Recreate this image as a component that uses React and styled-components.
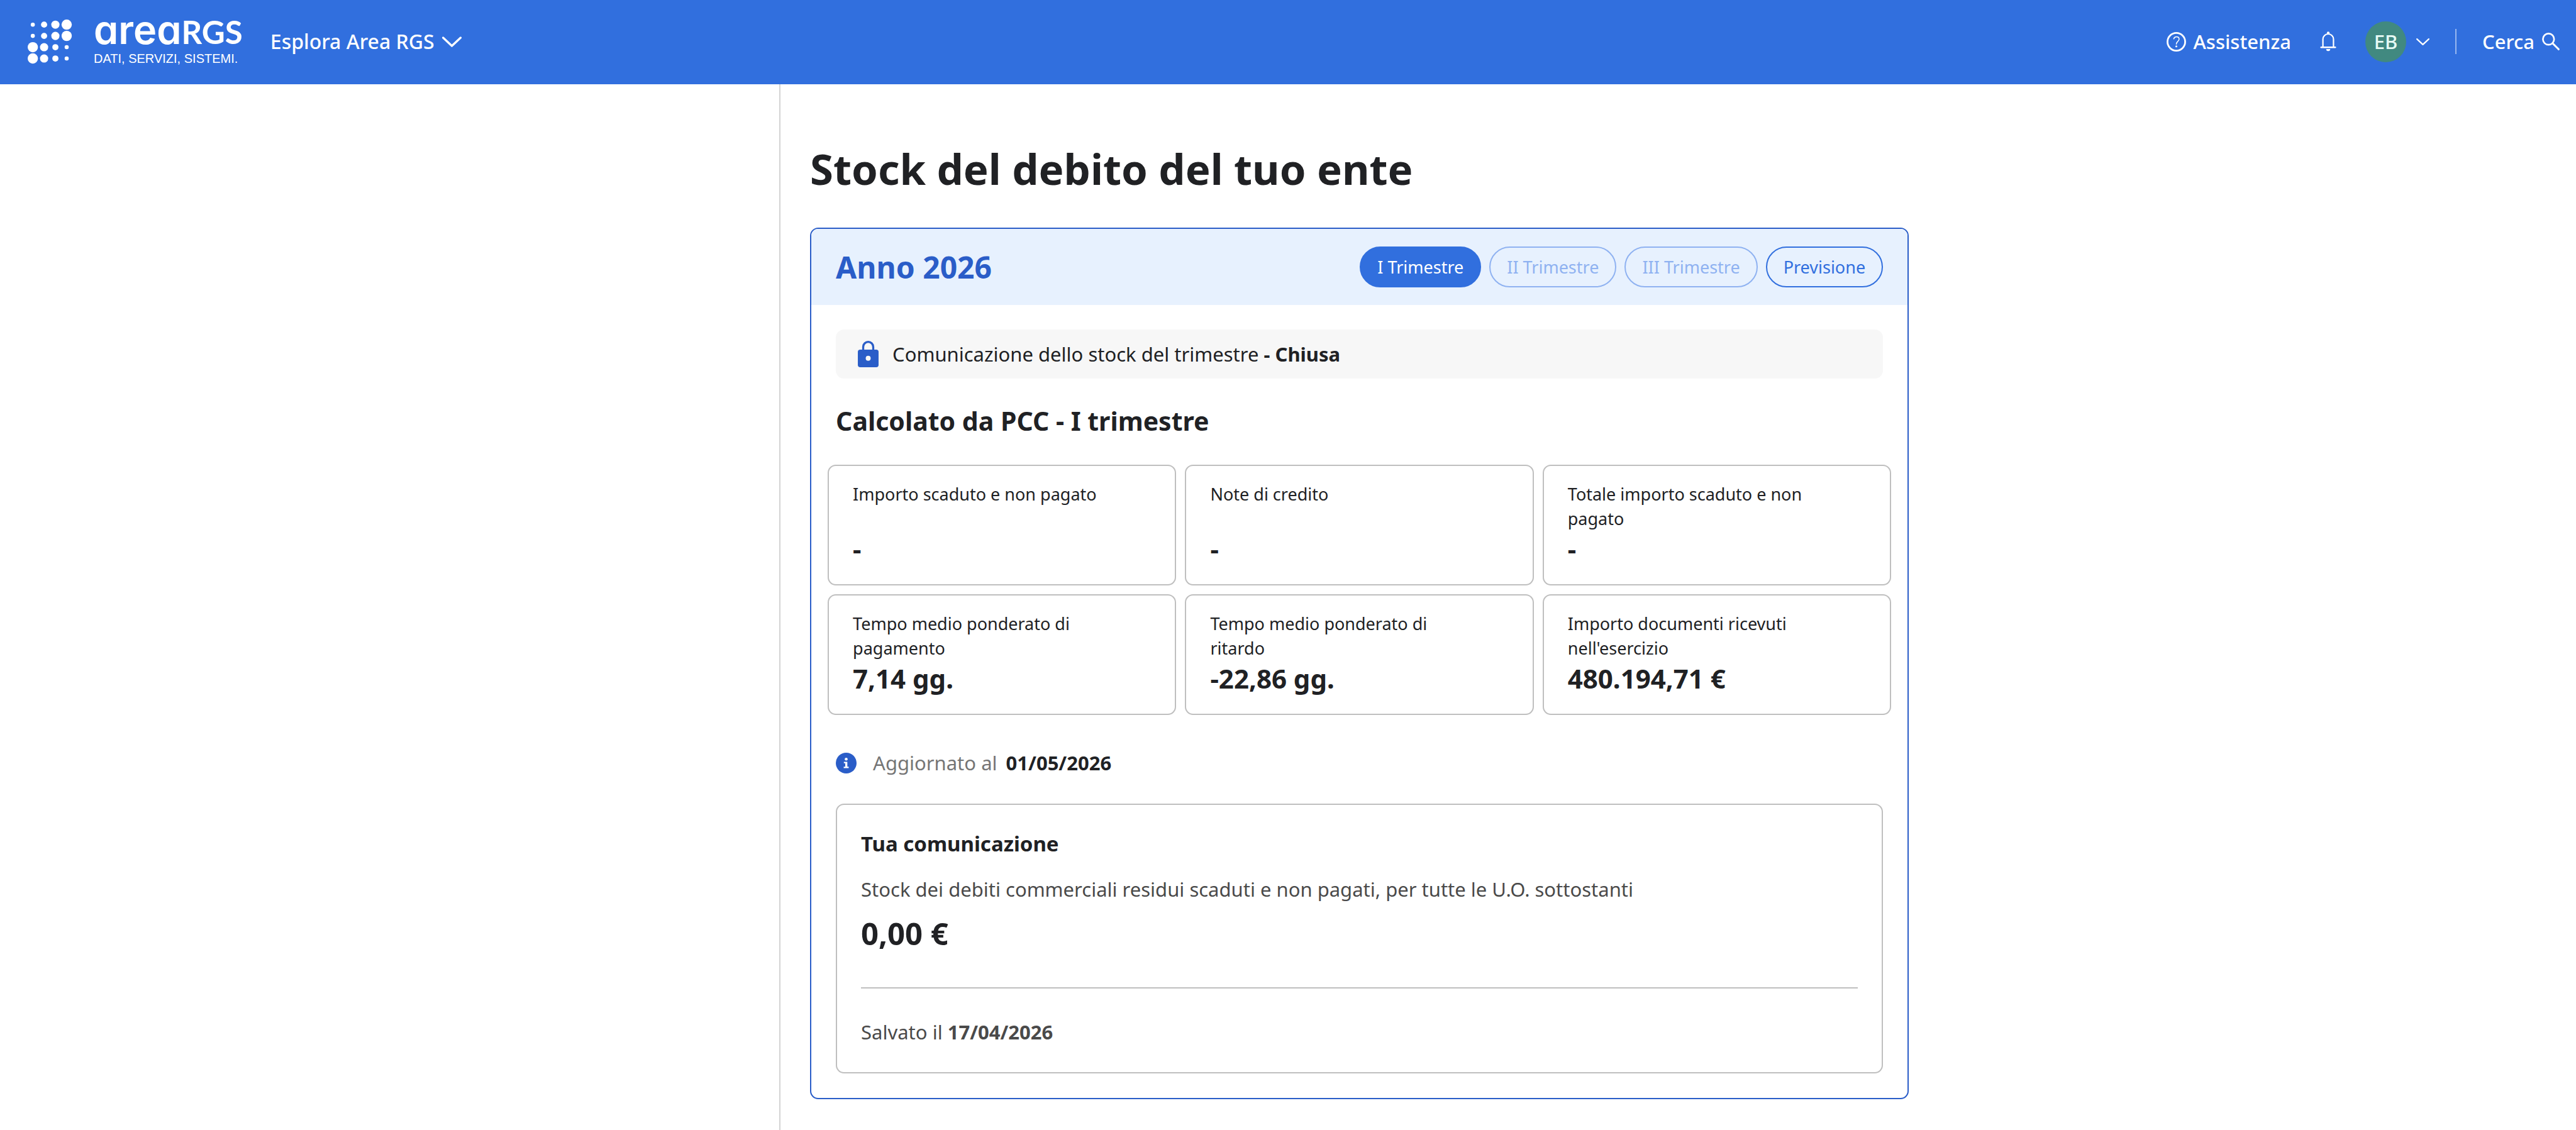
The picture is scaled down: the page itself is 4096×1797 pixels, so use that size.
import React from 'react';
import styled, { createGlobalStyle } from 'styled-components';

const dotSizes = [
  [4, 6, 8, 10],
  [4, 6, 8, 10],
  [10, 8, 6, 4],
  [10, 8, 6, 4],
];

const quarters = [
  { label: 'I Trimestre', active: true },
  { label: 'II Trimestre', disabled: true },
  { label: 'III Trimestre', disabled: true },
  { label: 'Previsione' },
];

const stockCards = [
  { label: 'Importo scaduto e non pagato', value: '-' },
  { label: 'Note di credito', value: '-' },
  { label: 'Totale importo scaduto e non pagato', value: '-' },
  { label: 'Tempo medio ponderato di pagamento', value: '7,14 gg.' },
  { label: 'Tempo medio ponderato di ritardo', value: '-22,86 gg.' },
  { label: "Importo documenti ricevuti nell'esercizio", value: '480.194,71 €' },
];

function LogoDots() {
  return (
    <svg width="71" height="71" viewBox="0 0 87 87" fill="currentColor" aria-hidden="true">
      {dotSizes.map((row, y) =>
        row.map((r, x) => <circle key={`${x}-${y}`} cx={10 + x * 22} cy={10 + y * 22} r={r} />)
      )}
    </svg>
  );
}

function Chevron({ width, height }) {
  return (
    <svg width={width} height={height} viewBox="0 0 38 20" fill="none" aria-hidden="true">
      <path d="M2 2l17 16L36 2" stroke="currentColor" strokeWidth="4" strokeLinecap="round" strokeLinejoin="round" />
    </svg>
  );
}

function HelpIcon() {
  return (
    <svg width="31" height="31" viewBox="0 0 38 38" fill="none" stroke="currentColor" aria-hidden="true">
      <circle cx="19" cy="19" r="17.2" strokeWidth="3.4" />
      <path d="M14 13.2c.7-2.6 2.7-3.9 5.2-3.9 3 0 5.2 1.9 5.2 4.6 0 4.3-5.4 4.5-5.4 9.6" strokeWidth="1.8" strokeLinecap="round" />
      <circle cx="19" cy="27.8" r="1.9" fill="currentColor" stroke="none" />
    </svg>
  );
}

function BellIcon() {
  return (
    <svg width="26" height="32" viewBox="0 0 32 40" fill="none" aria-hidden="true">
      <path d="M5.5 31V15.5a10.5 10.5 0 0 1 21 0V31" stroke="currentColor" strokeWidth="2.8" />
      <path d="M2 31.5h28" stroke="currentColor" strokeWidth="3.2" strokeLinecap="round" />
      <circle cx="16" cy="3" r="2.7" fill="currentColor" />
      <path d="M12 35h8a4 4 0 0 1-8 0z" fill="currentColor" />
    </svg>
  );
}

function SearchIcon() {
  return (
    <svg width="28" height="28" viewBox="0 0 34 34" fill="none" stroke="currentColor" aria-hidden="true">
      <circle cx="12.5" cy="12.5" r="10.8" strokeWidth="3.2" />
      <path d="M20.5 20.5L32 32" strokeWidth="3.6" strokeLinecap="round" />
    </svg>
  );
}

function LockIcon() {
  return (
    <svg width="33" height="42" viewBox="0 0 40 51" aria-hidden="true">
      <path d="M10.3 19v-7.3a9.7 9.7 0 0 1 19.4 0V19" fill="none" stroke="#2a5dc8" strokeWidth="4" />
      <rect y="17" width="40" height="34" rx="4.5" fill="#2a5dc8" />
      <circle cx="20" cy="33.7" r="4.8" fill="#f7f7f7" />
    </svg>
  );
}

function InfoIcon() {
  return (
    <svg width="33" height="33" viewBox="0 0 40 40" aria-hidden="true">
      <circle cx="20" cy="20" r="20" fill="#2a5dc8" />
      <circle cx="20" cy="12.5" r="2.8" fill="#fff" />
      <path d="M15.5 17.5h6.7V27h2.6v2.8h-9.6V27h3v-6.700h-2.700z" fill="#fff" />
    </svg>
  );
}

function App() {
  return (
    <>
      <GlobalStyle />
      <Page>
        <Header>
          <Brand href="#">
            <LogoDots />
            <BrandText>
              <BrandName>
                <BrandArea>area</BrandArea>
                <BrandRgs>RGS</BrandRgs>
              </BrandName>
              <BrandClaim>DATI, SERVIZI, SISTEMI.</BrandClaim>
            </BrandText>
          </Brand>
          <HeaderButton $large>
            Esplora Area RGS
            <Chevron width={31} height={17} />
          </HeaderButton>
          <HeaderActions>
            <HeaderLink href="#">
              <HelpIcon />
              Assistenza
            </HeaderLink>
            <IconButton aria-label="Notifiche">
              <BellIcon />
            </IconButton>
            <UserButton aria-label="Profilo utente">
              <Avatar>EB</Avatar>
              <Chevron width={21} height={11} />
            </UserButton>
            <Divider />
            <HeaderButton>
              Cerca
              <SearchIcon />
            </HeaderButton>
          </HeaderActions>
        </Header>

        <Content>
          <Sidebar />
          <Main>
            <Title>Stock del debito del tuo ente</Title>
            <Panel>
              <PanelHeader>
                <Year>Anno 2026</Year>
                <Quarters>
                  {quarters.map((quarter) => (
                    <QuarterButton key={quarter.label} $active={quarter.active} disabled={quarter.disabled}>
                      {quarter.label}
                    </QuarterButton>
                  ))}
                </Quarters>
              </PanelHeader>

              <PanelBody>
                <Notice>
                  <LockIcon />
                  <p>
                    Comunicazione dello stock del trimestre <b>- Chiusa</b>
                  </p>
                </Notice>

                <SectionTitle>Calcolato da PCC - I trimestre</SectionTitle>
                <Cards>
                  {stockCards.map((card) => (
                    <Card key={card.label}>
                      <CardLabel>{card.label}</CardLabel>
                      <CardValue>{card.value}</CardValue>
                    </Card>
                  ))}
                </Cards>

                <Updated>
                  <InfoIcon />
                  <p>
                    Aggiornato al <b>01/05/2026</b>
                  </p>
                </Updated>

                <Communication>
                  <CommunicationTitle>Tua comunicazione</CommunicationTitle>
                  <CommunicationText>
                    Stock dei debiti commerciali residui scaduti e non pagati, per tutte le U.O. sottostanti
                  </CommunicationText>
                  <Amount>0,00 €</Amount>
                  <Rule />
                  <Saved>
                    Salvato il <b>17/04/2026</b>
                  </Saved>
                </Communication>
              </PanelBody>
            </Panel>
          </Main>
        </Content>
      </Page>
    </>
  );
}

const GlobalStyle = createGlobalStyle`
  * {
    box-sizing: border-box;
  }
  body {
    margin: 0;
    background: #fff;
    color: #202124;
    font-family: 'Noto Sans', sans-serif;
    font-size: 31px;
    line-height: 40px;
  }
  h1, h2, h3, p, dl, dd {
    margin: 0;
  }
  button {
    font: inherit;
    color: inherit;
    background: none;
    border: none;
    padding: 0;
    cursor: pointer;
  }
  svg {
    display: block;
    flex: none;
  }
`;

const Page = styled.div`
  min-height: 100vh;
  display: flex;
  flex-direction: column;
`;

const Header = styled.header`
  display: flex;
  align-items: center;
  min-height: 134px;
  padding: 0 26px 2px 44px;
  background: #316fde;
  color: #fff;
`;

const Brand = styled.a`
  display: flex;
  align-items: center;
  gap: 34px;
  margin-right: 44px;
  color: #fff;
  text-decoration: none;
`;

const BrandText = styled.div`
  padding-bottom: 2px;
`;

const BrandName = styled.div`
  display: flex;
  align-items: baseline;
  height: 48px;
  line-height: 48px;
`;

const BrandArea = styled.span`
  font-family: Inter, sans-serif;
  font-feature-settings: 'cv11';
  font-size: 63px;
  font-weight: 600;
`;

const BrandRgs = styled.span`
  font-family: Lato, sans-serif;
  font-size: 51px;
  font-weight: 700;
`;

const BrandClaim = styled.div`
  margin-top: 8px;
  font-family: 'Liberation Sans', sans-serif;
  font-size: 20px;
  line-height: 28px;
`;

const HeaderButton = styled.button`
  display: flex;
  align-items: center;
  gap: 12px;
  font-size: ${({ $large }) => ($large ? '32px' : '31px')};
  font-weight: 500;
`;

const HeaderLink = styled.a`
  display: flex;
  align-items: center;
  gap: 12px;
  color: #fff;
  font-weight: 500;
  text-decoration: none;
`;

const HeaderActions = styled.nav`
  display: flex;
  align-items: center;
  gap: 41px;
  margin-left: auto;
`;

const IconButton = styled.button`
  display: flex;
  justify-content: center;
  width: 36px;
`;

const UserButton = styled.button`
  display: flex;
  align-items: center;
  gap: 16px;
`;

const Avatar = styled.span`
  display: flex;
  align-items: center;
  justify-content: center;
  width: 65px;
  height: 65px;
  border-radius: 50%;
  background: #418980;
  color: #e6faf5;
  font-weight: 500;
`;

const Divider = styled.span`
  width: 2px;
  height: 40px;
  background: #98b7ef;
`;

const Content = styled.div`
  display: flex;
  flex: 1;
`;

const Sidebar = styled.aside`
  flex: 0 0 30.3%;
  border-right: 2px solid #d4d4d4;
`;

const Main = styled.main`
  width: 43.8%;
  padding: 90px 0 48px 47px;
`;

const Title = styled.h1`
  margin-bottom: 50px;
  font-size: 67px;
  font-weight: 700;
  line-height: 88px;
`;

const Panel = styled.section`
  border: 2px solid #2a5dc8;
  border-radius: 13px;
  overflow: hidden;
`;

const PanelHeader = styled.div`
  display: flex;
  align-items: center;
  justify-content: space-between;
  padding: 28px 39px;
  background: #e7f1fe;
`;

const Year = styled.h2`
  color: #2a5dc8;
  font-size: 48px;
  font-weight: 700;
  line-height: 64px;
`;

const Quarters = styled.div`
  display: flex;
  gap: 13px;
`;

const QuarterButton = styled.button`
  height: 65px;
  padding: 0 26px;
  border: 2px solid #316fde;
  border-radius: 33px;
  background: ${({ $active }) => ($active ? '#316fde' : 'transparent')};
  color: ${({ $active }) => ($active ? '#fff' : '#316fde')};
  font-size: 27px;
  &:disabled {
    border-color: #8fb2f1;
    color: #8fb2f1;
    cursor: default;
  }
`;

const PanelBody = styled.div`
  padding: 39px;
`;

const Notice = styled.div`
  display: flex;
  align-items: center;
  gap: 22px;
  min-height: 78px;
  padding: 0 35px;
  border-radius: 13px;
  background: #f7f7f7;
`;

const SectionTitle = styled.h3`
  margin: 40px 0 43px;
  font-size: 41px;
  font-weight: 700;
  line-height: 54px;
`;

const Cards = styled.dl`
  display: grid;
  grid-template-columns: repeat(3, 1fr);
  gap: 14px;
  margin: 0 -13px;
`;

const Card = styled.div`
  padding: 25px 38px 27px;
  border: 2px solid #bfbfbf;
  border-radius: 13px;
`;

const CardLabel = styled.dt`
  min-height: 78px;
  padding-right: 60px;
  font-size: 27px;
  line-height: 39px;
`;

const CardValue = styled.dd`
  font-size: 42px;
  font-weight: 700;
  line-height: 58px;
`;

const Updated = styled.div`
  display: flex;
  align-items: center;
  gap: 26px;
  margin: 56px 0 45px;
  color: #757575;
  b {
    margin-left: 6px;
    color: #202124;
  }
`;

const Communication = styled.section`
  padding: 40px 38px 44px;
  border: 2px solid #bfbfbf;
  border-radius: 13px;
`;

const CommunicationTitle = styled.h4`
  margin: 0 0 30px;
  font-size: 33px;
  font-weight: 700;
  line-height: 44px;
`;

const CommunicationText = styled.p`
  color: #4a4a4a;
`;

const Amount = styled.p`
  margin-top: 18px;
  font-size: 49px;
  font-weight: 700;
  line-height: 64px;
`;

const Rule = styled.hr`
  margin: 54px 0 49px;
  border: none;
  border-top: 2px solid #bfbfbf;
`;

const Saved = styled.p`
  color: #4a4a4a;
`;

export default App;
